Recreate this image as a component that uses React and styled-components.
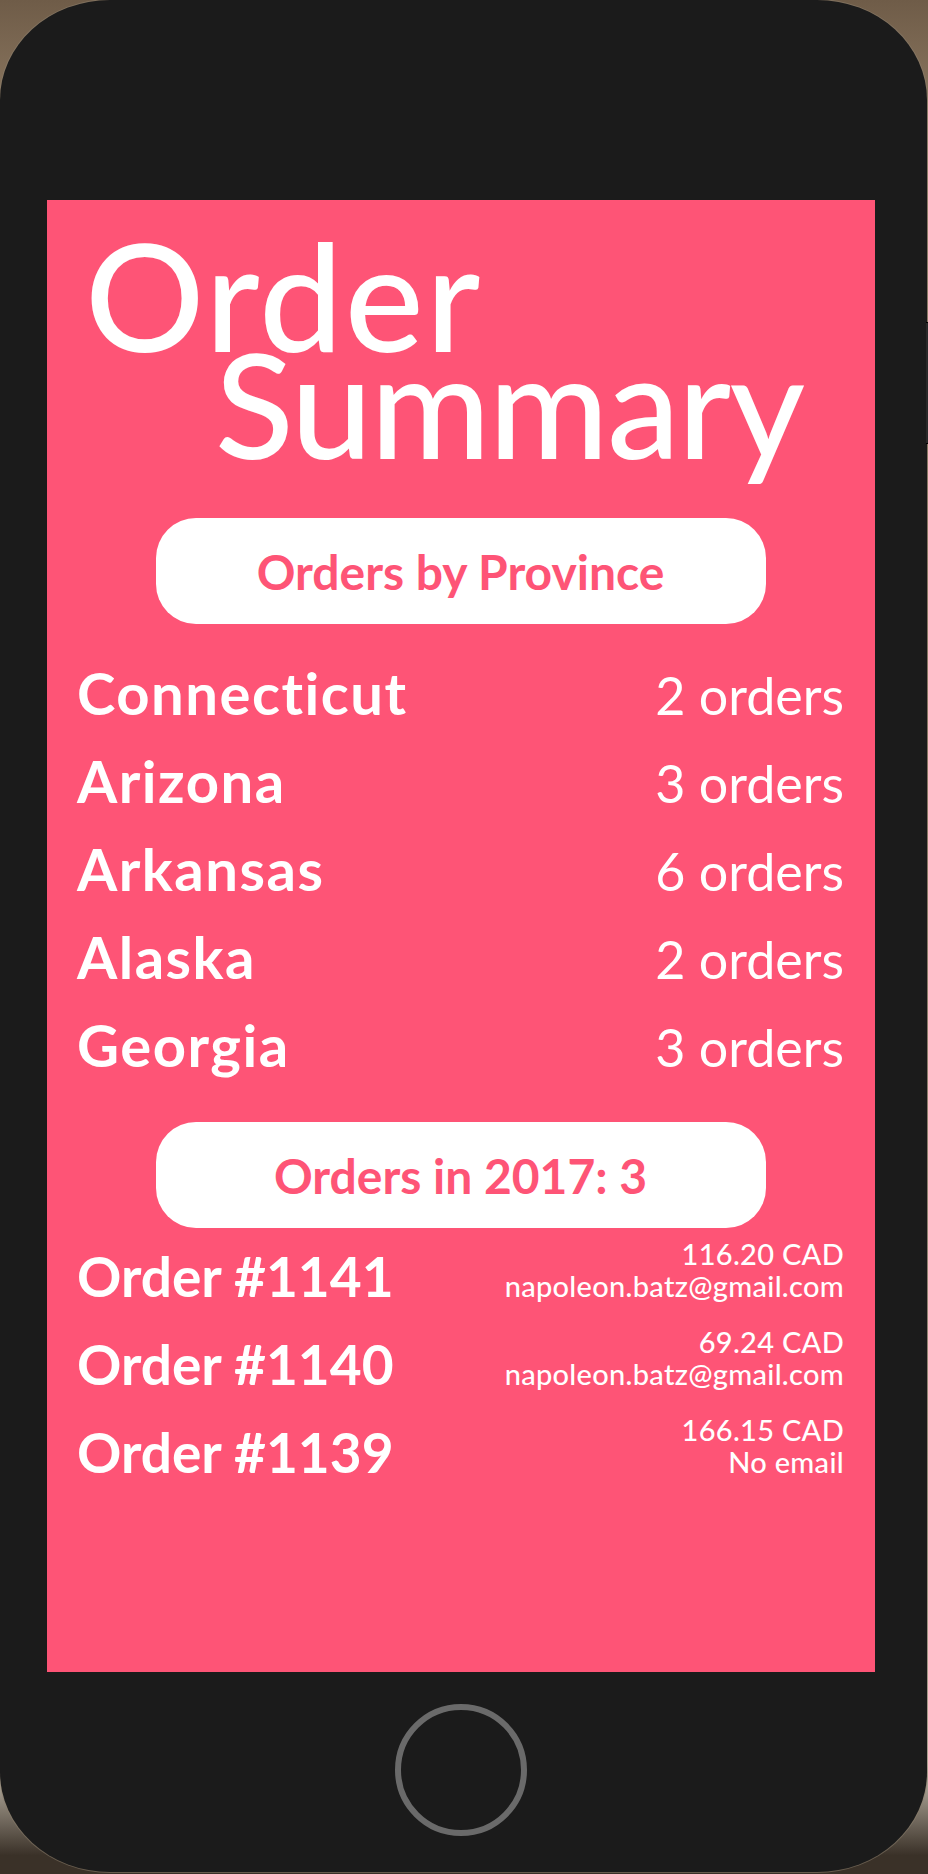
import React from "react";
import styled, { createGlobalStyle } from "styled-components";

const PINK = "#fe5476";
const FONT = `"Lato", "Noto Sans", "Liberation Sans", sans-serif`;

const Global = createGlobalStyle`
  html, body { margin: 0; padding: 0; }
  body {
    width: 928px;
    height: 1874px;
    overflow: hidden;
    font-family: ${FONT};
    background:
      linear-gradient(180deg, #6f5c48 0%, #8b7760 6%, #7a6852 40%, #9a9080 80%, #cfc7b8 94%, #3a3128 99%);
  }
`;

const Stage = styled.div`
  position: relative;
  width: 928px;
  height: 1874px;
`;

const Phone = styled.div`
  width: 927px;
  height: 1872px;
  box-sizing: border-box;
  padding: 200px 52px 0 47px;
  background: #1b1b1b;
  border-radius: 110px / 100px;
  box-shadow: 0 0 0 1px rgba(140, 128, 110, 0.55);
  display: flex;
  flex-direction: column;
`;

const SideButton = styled.div`
  position: absolute;
  left: 926px;
  top: 322px;
  width: 2px;
  height: 120px;
  background: #2a2a2a;
  border-top: 1px solid #000;
  border-bottom: 1px solid #000;
`;

const Screen = styled.main`
  width: 828px;
  height: 1472px;
  box-sizing: border-box;
  background: ${PINK};
  color: #fff;
  display: flex;
  flex-direction: column;
  padding: 41px 31px 0 30px;
`;

const Title = styled.h1`
  margin: 0;
  font-family: ${FONT};
  font-weight: 500;
  font-size: 145px;
  line-height: 108px;
`;

const TitleLine = styled.div`
  padding-left: ${(p) => p.$indent}px;
  letter-spacing: ${(p) => p.$spacing}px;
  font-size: ${(p) => p.$size}px;
  white-space: nowrap;
`;

const Pill = styled.div`
  align-self: center;
  width: 610px;
  height: 106px;
  border-radius: 40px;
  background: #fff;
  color: ${PINK};
  display: flex;
  align-items: center;
  justify-content: center;
  font-weight: 700;
  font-size: 48px;
  margin-top: ${(p) => p.$mt}px;
`;

const RowList = styled.div`
  display: flex;
  flex-direction: column;
  margin-top: 25px;
`;

const Row = styled.div`
  height: 88px;
  display: flex;
  justify-content: space-between;
  align-items: baseline;
  line-height: 88px;
`;

const Name = styled.span`
  font-weight: 700;
  font-size: 58px;
  letter-spacing: 1.5px;
`;

const Count = styled.span`
  font-weight: 400;
  font-size: 52px;
`;

const OrderList = styled.div`
  display: flex;
  flex-direction: column;
  gap: 24px;
  margin-top: 10px;
`;

const OrderRow = styled.div`
  display: flex;
  justify-content: space-between;
  align-items: flex-end;
`;

const OrderTitle = styled.span`
  font-weight: 700;
  font-size: 55px;
  line-height: 52px;
`;

const Meta = styled.div`
  display: flex;
  flex-direction: column;
  align-items: flex-end;
  font-weight: 500;
  font-size: 29px;
  line-height: 32px;
  letter-spacing: 0.3px;
`;

const HomeButton = styled.div`
  align-self: center;
  margin-top: 32px;
  width: 132px;
  height: 132px;
  box-sizing: border-box;
  border-radius: 50%;
  border: 6px solid #6a6a6a;
`;

const provinces = [
  ["Connecticut", 2],
  ["Arizona", 3],
  ["Arkansas", 6],
  ["Alaska", 2],
  ["Georgia", 3],
];

const orders = [
  ["1141", "116.20 CAD", "napoleon.batz@gmail.com"],
  ["1140", "69.24 CAD", "napoleon.batz@gmail.com"],
  ["1139", "166.15 CAD", "No email"],
];

export default function App() {
  return (
    <Stage>
      <Global />
      <Phone>
        <Screen>
          <Title>
            <TitleLine $indent={8} $size={149} $spacing={2}>Order</TitleLine>
            <TitleLine $indent={138} $size={145} $spacing={-1.5}>Summary</TitleLine>
          </Title>
          <Pill $mt={61}>Orders by Province</Pill>
          <RowList>
            {provinces.map(([name, n]) => (
              <Row key={name}>
                <Name>{name}</Name>
                <Count>{n} orders</Count>
              </Row>
            ))}
          </RowList>
          <Pill $mt={33}>Orders in 2017: 3</Pill>
          <OrderList>
            {orders.map(([id, total, email]) => (
              <OrderRow key={id}>
                <OrderTitle>Order #{id}</OrderTitle>
                <Meta>
                  <span>{total}</span>
                  <span>{email}</span>
                </Meta>
              </OrderRow>
            ))}
          </OrderList>
        </Screen>
        <HomeButton />
      </Phone>
      <SideButton />
    </Stage>
  );
}
